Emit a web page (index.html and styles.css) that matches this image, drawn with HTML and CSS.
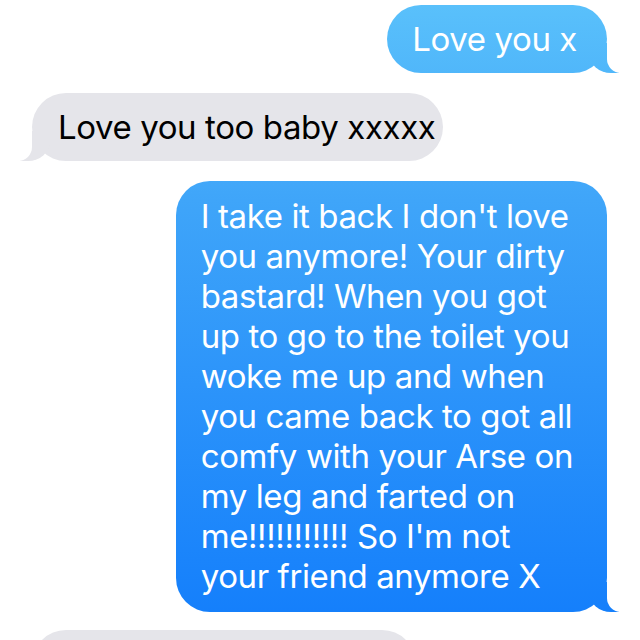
FILE: index.html
```html
<!DOCTYPE html>
<html lang="en">
<head>
<meta charset="utf-8">
<title>Messages</title>
<link rel="stylesheet" href="styles.css">
</head>
<body>
<div class="thread">
  <div class="row row-sent">
    <div class="bubble sent short">Love you x</div>
  </div>
  <div class="row row-received">
    <div class="bubble received">Love you too baby xxxxx</div>
  </div>
  <div class="row row-sent">
    <div class="bubble sent tall">I take it back I don't love<br>you anymore! Your dirty<br>bastard! When you got<br>up to go to the toilet you<br>woke me up and when<br>you came back to got all<br>comfy with your Arse on<br>my leg and farted on<br>me!!!!!!!!!!! So I'm not<br>your friend anymore X</div>
  </div>
  <div class="row row-received">
    <div class="bubble received next" aria-hidden="true"></div>
  </div>
</div>
</body>
</html>
```
FILE: styles.css
```css
html, body {
  margin: 0;
  padding: 0;
  background: #ffffff;
}

body {
  width: 640px;
  height: 640px;
  overflow: hidden;
  font-family: Inter, "Noto Sans", sans-serif;
  font-size: 33px;
  line-height: 40px;
  letter-spacing: -0.4px;
  -webkit-font-smoothing: antialiased;
}

.thread {
  display: flex;
  flex-direction: column;
  gap: 20px;
  padding-top: 5px;
}

.row {
  display: flex;
}

.row-sent {
  justify-content: flex-end;
  padding-right: 33px;
}

.row-received {
  justify-content: flex-start;
  padding-left: 32px;
}

.bubble {
  position: relative;
  border-radius: 34px;
  white-space: nowrap;
}

.sent {
  color: #ffffff;
  background: linear-gradient(to bottom, #5ac1fb 0px, #3fa5f9 200px, #1a84fb 560px, #127dfb 640px) fixed;
  padding: 14px 34px 14px 25px;
}

.sent.short {
  padding-right: 30px;
}

.sent.tall {
  padding-top: 15px;
  padding-bottom: 16px;
}

.received {
  color: #000000;
  background: #e5e5ea;
  padding: 14px 8px 14px 26px;
}

.received.next {
  width: 350px;
  height: 40px;
  margin-top: -2px;
}

.sent::before,
.received::before {
  content: "";
  position: absolute;
  bottom: 0;
  height: 30px;
  width: 30px;
  z-index: 0;
}

.sent::before {
  right: -12px;
  background: linear-gradient(to bottom, #5ac1fb 0px, #3fa5f9 200px, #1a84fb 560px, #127dfb 640px) fixed;
  border-bottom-left-radius: 22px 20px;
}

.received::before {
  left: -12px;
  background: #e5e5ea;
  border-bottom-right-radius: 22px 20px;
}

.sent::after,
.received::after {
  content: "";
  position: absolute;
  bottom: 0;
  height: 30px;
  width: 15px;
  background: #ffffff;
  z-index: 1;
}

.sent::after {
  right: -15px;
  border-bottom-left-radius: 14px;
}

.received::after {
  left: -15px;
  border-bottom-right-radius: 14px;
}
```
